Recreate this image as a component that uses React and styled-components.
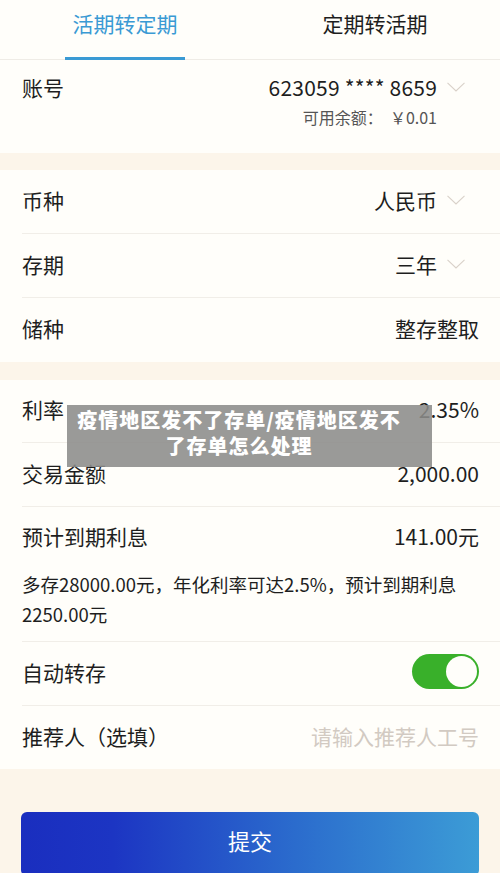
import React from 'react'
import styled, { createGlobalStyle } from 'styled-components'

const GlobalStyle = createGlobalStyle`
  html, body {
    margin: 0;
    padding: 0;
    background: #fcf5ea;
    font-family: "Noto Sans CJK SC", "Noto Sans", sans-serif;
    color: #1e1e1e;
  }
`

const Page = styled.div`
  position: relative;
  width: 500px;
  height: 873px;
  overflow: hidden;
  background: #fcf5ea;
`

const Tabs = styled.div`
  display: flex;
  height: 59px;
  background: #fffefa;
  border-bottom: 1px solid #efece6;
`

const Tab = styled.div`
  flex: 1;
  position: relative;
  display: flex;
  align-items: center;
  justify-content: center;
  padding-bottom: 13px;
  font-size: 21px;
  color: ${p => (p.active ? '#3a9ad4' : '#1e1e1e')};

  &::after {
    content: '';
    display: ${p => (p.active ? 'block' : 'none')};
    position: absolute;
    bottom: -1px;
    left: 65px;
    width: 120px;
    height: 3px;
    background: #3a9ad4;
  }
`

const Section = styled.section`
  background: #fffefa;
  margin-bottom: ${p => p.gap || 0}px;
`

const Row = styled.div`
  display: flex;
  align-items: center;
  justify-content: space-between;
  height: ${p => p.h || 64}px;
  margin-left: 22px;
  padding-right: ${p => (p.chevron ? 35 : 21)}px;
  padding-bottom: 4px;
  box-sizing: border-box;
  border-bottom: ${p => (p.line ? '1px solid #f1eee8' : 'none')};
`

const Label = styled.span`
  font-size: 21px;
  color: #1e1e1e;
`

const Value = styled.span`
  display: flex;
  align-items: center;
  font-size: 21px;
  color: ${p => (p.placeholder ? '#d2cac2' : '#1e1e1e')};
`

const Chevron = styled.svg`
  width: 18px;
  height: 10px;
  margin-left: 10px;
`

const AccountRow = styled.div`
  display: flex;
  justify-content: space-between;
  align-items: flex-start;
  height: 93px;
  padding: 12px 35px 0 22px;
  box-sizing: border-box;
`

const AccountRight = styled.div`
  display: flex;
  flex-direction: column;
  align-items: flex-end;
`

const AccountNo = styled.div`
  display: flex;
  align-items: center;
  font-size: 21px;
  letter-spacing: 0.2px;
`

const Balance = styled.div`
  margin-top: 3px;
  margin-right: 28px;
  font-size: 16px;
  color: #555;
  white-space: pre;
`

const Note = styled.div`
  margin-left: 22px;
  padding: 0 20px 12px 0;
  font-size: 18.5px;
  line-height: 30px;
  color: #1e1e1e;
  border-bottom: 1px solid #f1eee8;
`

const Toggle = styled.div`
  width: 67px;
  height: 35px;
  border-radius: 18px;
  background: #39b02a;
  display: flex;
  align-items: center;
  justify-content: flex-end;
  padding: 2px;
  box-sizing: border-box;
`

const Knob = styled.div`
  width: 31px;
  height: 31px;
  border-radius: 50%;
  background: #fffefa;
`

const Submit = styled.button`
  display: block;
  width: 458px;
  height: 64px;
  margin: 43px 21px 0;
  border: none;
  border-radius: 6px;
  background: linear-gradient(90deg, #1a2ebf 0%, #1c35c3 20%, #2b6ccd 60%, #3c9cd6 100%);
  color: #fff;
  font-family: inherit;
  font-size: 22px;
  padding-bottom: 10px;
`

const Overlay = styled.div`
  position: absolute;
  left: 67px;
  top: 405px;
  width: 365px;
  height: 62px;
  background: rgba(140, 140, 138, 0.88);
  color: #fff;
  font-size: 20px;
  font-weight: 900;
  letter-spacing: 1px;
  line-height: 26px;
  text-align: center;
  padding: 2px 26px 0 5px;
  box-sizing: border-box;
`

const Down = () => (
  <Chevron viewBox="0 0 18 10">
    <path d="M0.5 0.8 L9 9 L17.5 0.8" fill="none" stroke="#d9d1c9" strokeWidth="1.1" />
  </Chevron>
)

const App = () => {
  return (
    <Page>
      <GlobalStyle />
      <Tabs>
        <Tab active>活期转定期</Tab>
        <Tab>定期转活期</Tab>
      </Tabs>

      <Section gap={17}>
        <AccountRow>
          <Label>账号</Label>
          <AccountRight>
            <AccountNo>
              623059 **** 8659
              <Down />
            </AccountNo>
            <Balance>{'可用余额：  ￥0.01'}</Balance>
          </AccountRight>
        </AccountRow>
      </Section>

      <Section gap={18}>
        <Row line chevron>
          <Label>币种</Label>
          <Value>人民币<Down /></Value>
        </Row>
        <Row line chevron>
          <Label>存期</Label>
          <Value>三年<Down /></Value>
        </Row>
        <Row>
          <Label>储种</Label>
          <Value>整存整取</Value>
        </Row>
      </Section>

      <Section>
        <Row line h={63}>
          <Label>利率</Label>
          <Value>2.35%</Value>
        </Row>
        <Row line>
          <Label>交易金额</Label>
          <Value>2,000.00</Value>
        </Row>
        <Row h={62}>
          <Label>预计到期利息</Label>
          <Value>141.00元</Value>
        </Row>
        <Note>多存28000.00元，年化利率可达2.5%，预计到期利息2250.00元</Note>
        <Row line>
          <Label>自动转存</Label>
          <Toggle>
            <Knob />
          </Toggle>
        </Row>
        <Row h={63}>
          <Label>推荐人（选填）</Label>
          <Value placeholder>请输入推荐人工号</Value>
        </Row>
      </Section>

      <Submit>提交</Submit>

      <Overlay>疫情地区发不了存单/疫情地区发不了存单怎么处理</Overlay>
    </Page>
  )
}

export default App
